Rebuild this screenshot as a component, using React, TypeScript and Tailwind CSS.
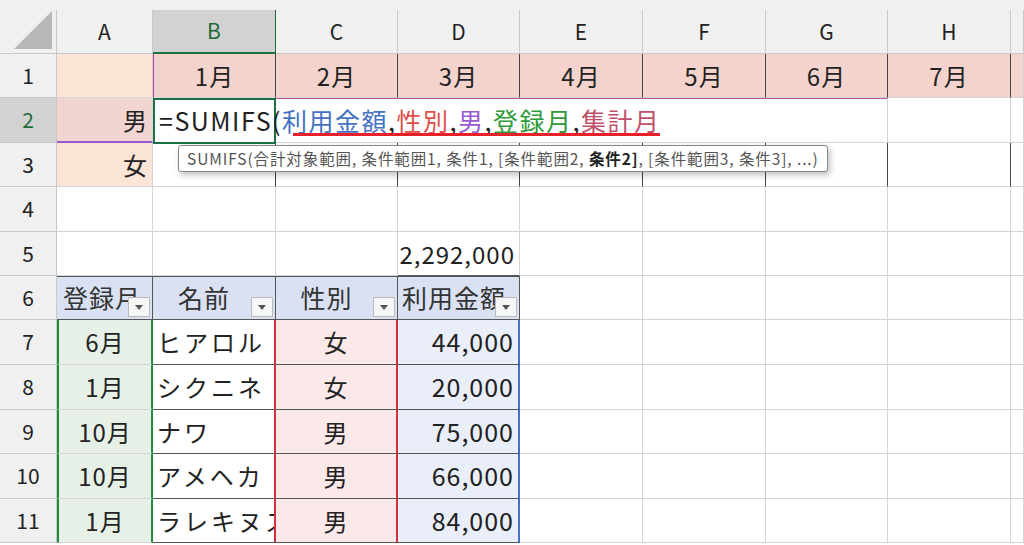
const F = { fontFamily: '"Noto Sans CJK JP", "Noto Sans", sans-serif' };

const cols = ['A', 'B', 'C', 'D', 'E', 'F', 'G', 'H', ''];
const months = ['1月', '2月', '3月', '4月', '5月', '6月', '7月'];
const data = [
  ['6月', 'ヒアロル', '女', '44,000'],
  ['1月', 'シクニネ', '女', '20,000'],
  ['10月', 'ナワ', '男', '75,000'],
  ['10月', 'アメヘカ', '男', '66,000'],
  ['1月', 'ラレキヌス', '男', '84,000'],
];

function Cell({ className = '', children }: { className?: string; children?: React.ReactNode }) {
  return (
    <div className={`border-r border-b border-[#d4d4d4] flex items-center overflow-hidden whitespace-nowrap text-[24px] tracking-[1px] text-[#222] ${className}`}>
      {children}
    </div>
  );
}

function RowHead({ n, active }: { n: number; active?: boolean }) {
  return (
    <div className={`border-r border-b border-[#c8c8c8] flex items-center justify-center text-[21px] ${active ? 'bg-[#d2d2d2] text-[#1e6b3a]' : 'bg-[#f0f0f0] text-[#222]'}`}>
      {n}
    </div>
  );
}

function Drop() {
  return (
    <span className="absolute right-[2px] bottom-[2px] w-[22px] h-[20px] bg-[#f6f6f6] border border-[#bbb] flex items-center justify-center">
      <svg width="8" height="5" viewBox="0 0 8 5"><path d="M0 0h8L4 5z" fill="#555" /></svg>
    </span>
  );
}

export default function App() {
  const empty = (n: number, k: string) => Array.from({ length: n }, (_, i) => <Cell key={k + i} />);
  return (
    <div className="w-[1024px] h-[545px] overflow-hidden bg-white relative" style={F}>
      <div className="h-[10px] bg-[#f0f0f0]" />
      <div className="grid grid-cols-[57px_96px_123px_122px_122px_123px_123px_122px_123px_1fr] grid-rows-[44px_44px_45px_44px_45px_44px_44px_45px_45px_44px_45px_44px]">
        <div className="bg-[#f0f0f0] border-r border-b border-[#c8c8c8] relative">
          <svg className="absolute right-[4px] bottom-[4px]" width="38" height="38" viewBox="0 0 38 38"><path d="M38 0V38H0z" fill="#b8b8b8" /></svg>
        </div>
        {cols.map((c, i) => (
          <div key={i} className={`border-r border-b flex items-center justify-center text-[21px] ${i === 1 ? 'bg-[#d2d2d2] text-[#1e6b3a] border-b-[#1e7145] border-b-2' : 'bg-[#f0f0f0] text-[#222] border-[#c8c8c8]'}`}>{c}</div>
        ))}
        {/* row 1 */}
        <RowHead n={1} />
        <Cell className="bg-[#fce4d6]" />
        {months.map((m, i) => (
          <Cell key={m} className={`bg-[#f4d3cd] justify-center border-r-[#444] text-[22px] ${i === 0 ? 'border-l border-l-[#b040a0]' : ''}`}>{m}</Cell>
        ))}
        <Cell className="bg-[#f4d3cd]" />
        {/* row 2 */}
        <RowHead n={2} active />
        <Cell className="bg-[#f2d5d1] justify-end pr-1 border-b-[#9b59d0] border-b-2">男</Cell>
        <div className="col-span-6 relative bg-white border-b border-r border-[#d4d4d4] border-t border-t-[#c050a0] flex items-center text-[25px] tracking-[1.5px] text-[#222] whitespace-nowrap">
          <div className="absolute left-0 top-[-1px] w-[123px] h-[46px] border-2 border-[#1e7145]" />
          <span className="pl-[6px] relative">
            =SUMIFS(
            <span className="text-[#4472c4]">利用金額</span>,
            <span className="text-[#e0504a]">性別</span>,
            <span className="text-[#9b59d0]">男</span>,
            <span className="text-[#2e9a3a]">登録月</span>,
            <span className="text-[#c0506a]">集計月</span>
            <span className="absolute left-[140px] right-0 bottom-[3px] h-[3px] bg-[#e8202a]" />
          </span>
        </div>
        <Cell />
        <Cell />
        {/* row 3 */}
        <RowHead n={3} />
        <Cell className="bg-[#fce4d6] justify-end pr-1">女</Cell>
        {[0, 1, 2, 3, 4, 5, 6].map(i => <Cell key={i} className="border-r-[#444]" />)}
        <Cell />
        {/* row 4 */}
        <RowHead n={4} />
        {empty(9, 'r4')}
        {/* row 5 */}
        <RowHead n={5} />
        <Cell /><Cell /><Cell />
        <Cell className="justify-end pr-1 text-[22px] tracking-[0.5px] border-b-[#555]">2,292,000</Cell>
        {empty(5, 'r5')}
        {/* row 6 */}
        <RowHead n={6} />
        {['登録月', '名前', '性別', '利用金額'].map((h, i) => (
          <div key={h} className={`relative bg-[#d9e1f2] border-r border-b border-t border-[#555] flex items-center overflow-hidden whitespace-nowrap text-[25px] tracking-[1px] text-[#333] ${i === 0 ? 'pl-[6px]' : i === 3 ? 'pl-[4px]' : 'justify-center pr-5'}`}>
            {h}<Drop />
          </div>
        ))}
        {empty(5, 'r6')}
        {/* data rows */}
        {data.map((r, ri) => [
          <RowHead key={'h' + ri} n={7 + ri} />,
          <Cell key={'a' + ri} className="bg-[#e6f0e6] justify-center border-[#555] border-l-2 border-l-[#1e8a3a] border-r-2 border-r-[#1e8a3a]">{r[0]}</Cell>,
          <Cell key={'b' + ri} className="pl-1 border-b-[#555] border-r-2 border-r-[#d03040] tracking-[3px]">{r[1]}</Cell>,
          <Cell key={'c' + ri} className="bg-[#fbe9e9] justify-center border-b-[#555] border-r-2 border-r-[#d03040]">{r[2]}</Cell>,
          <Cell key={'d' + ri} className="bg-[#e9eef8] justify-end pr-1 border-b-[#555] border-r-2 border-r-[#4472c4] text-[25px]">{r[3]}</Cell>,
          ...empty(5, 'x' + ri),
        ])}
      </div>
      {/* tooltip */}
      <div className="absolute left-[178px] top-[145px] h-[27px] px-2 bg-white border border-[#888] rounded-[3px] shadow-[2px_3px_6px_rgba(0,0,0,0.25)] flex items-center text-[15.5px] tracking-[0.9px] text-[#555] whitespace-nowrap">
        SUMIFS(合計対象範囲, 条件範囲1, 条件1, [条件範囲2,&nbsp;<b className="text-[#222]">条件2]</b>, [条件範囲3, 条件3], ...)
      </div>
    </div>
  );
}
